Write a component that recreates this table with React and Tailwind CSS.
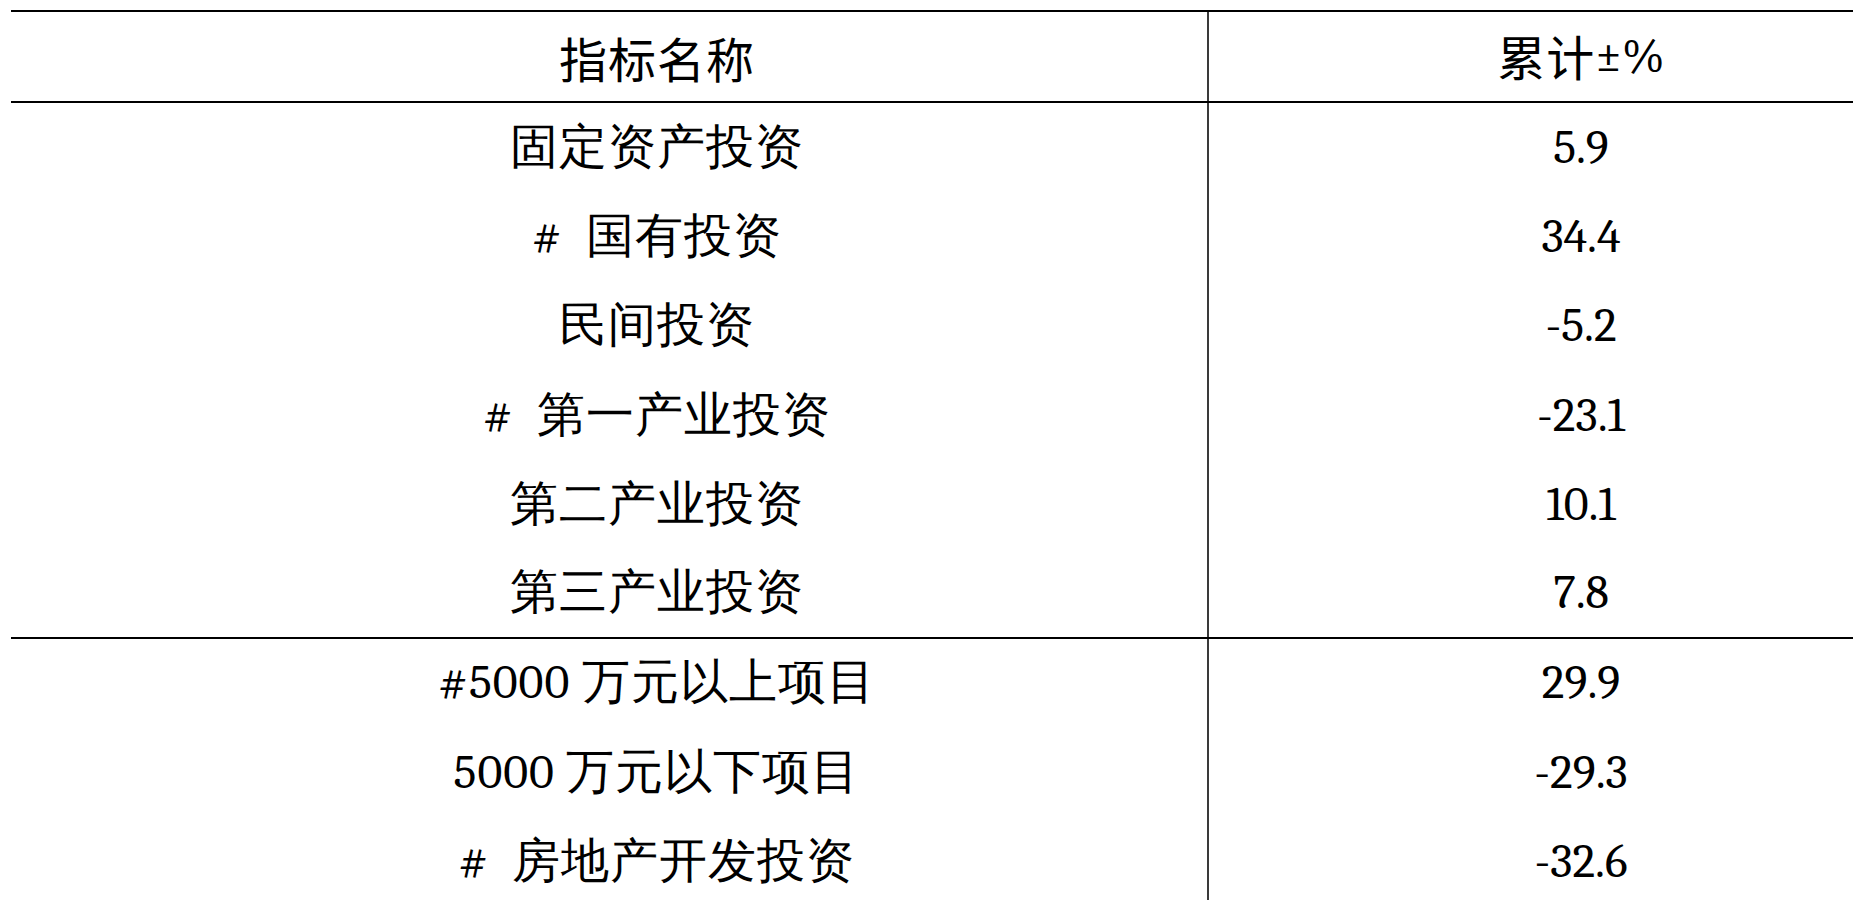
import React from "react";

const group1 = [
  ["固定资产投资", "5.9"],
  ["#\u00a0\u00a0国有投资", "34.4"],
  ["民间投资", "-5.2"],
  ["#\u00a0\u00a0第一产业投资", "-23.1"],
  ["第二产业投资", "10.1"],
  ["第三产业投资", "7.8"],
];

const group2 = [
  ["#5000 万元以上项目", "29.9"],
  ["5000 万元以下项目", "-29.3"],
  ["#\u00a0\u00a0房地产开发投资", "-32.6"],
];

function Row({ label, value, last }) {
  return (
    <div className={`flex h-[89.3px] ${last ? "border-b-2 border-black" : ""}`}>
      <div className="w-[1198px] shrink-0 border-r-2 border-[#3a3a3a] flex items-center justify-center pl-[96px] font-serif text-[48px] font-extralight tracking-[1px] text-black leading-none whitespace-pre">
        {label}
      </div>
      <div className="flex-1 flex items-center justify-center pl-[100px] font-serif text-[48px] font-normal text-black leading-none">
        {value}
      </div>
    </div>
  );
}

export default function App() {
  return (
    <div className="w-[1853px] h-[900px] overflow-hidden bg-white pt-[10px] pl-[11px]">
      <div className="border-t-2 border-black">
        <div className="flex h-[91px] border-b-2 border-black">
          <div className="w-[1198px] shrink-0 border-r-2 border-[#3a3a3a] flex items-center justify-center pl-[96px] font-sans font-normal text-[48px] tracking-[1px] text-black leading-none">
            <span className="font-[Noto_Sans_CJK_SC]">指标名称</span>
          </div>
          <div className="flex-1 flex items-center justify-center pl-[100px] text-[48px] text-black leading-none">
            <span className="font-sans font-normal tracking-[1px]">
              <span className="font-[Noto_Sans_CJK_SC]">累计</span>
            </span>
            <span className="font-serif font-normal">±%</span>
          </div>
        </div>
        {group1.map(([l, v], i) => (
          <Row key={i} label={l} value={v} last={i === group1.length - 1} />
        ))}
        {group2.map(([l, v], i) => (
          <Row key={"b" + i} label={l} value={v} last={false} />
        ))}
      </div>
    </div>
  );
}
